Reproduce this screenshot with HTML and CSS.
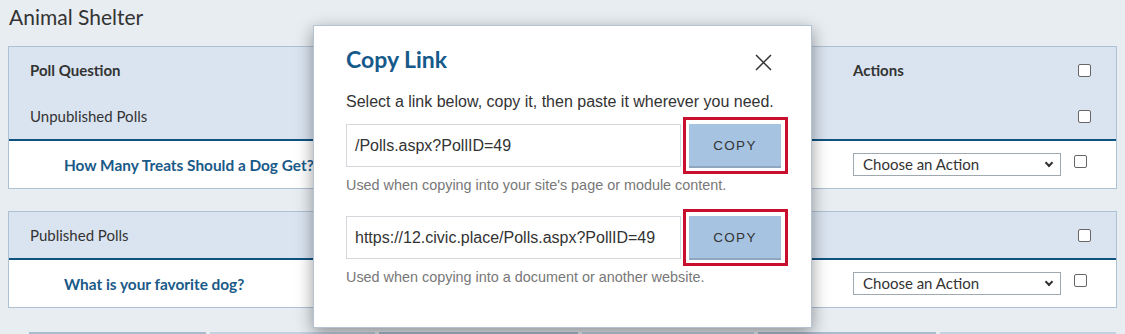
FILE: index.html
```html
<!DOCTYPE html>
<html lang="en">
<head>
    <meta charset="UTF-8">
    <title>Animal Shelter - Polls</title>
    <link rel="stylesheet" href="styles.css">
</head>
<body>
    <h1 class="page-title">Animal Shelter</h1>

    <div class="grid-table">
        <div class="row head">
            <div class="cell name strong">Poll Question</div>
            <div class="cell action strong">Actions</div>
            <div class="cell check"><span class="cb"></span></div>
        </div>
        <div class="row head group">
            <div class="cell name">Unpublished Polls</div>
            <div class="cell action"></div>
            <div class="cell check"><span class="cb"></span></div>
        </div>
        <div class="row item">
            <div class="cell name link">How Many Treats Should a Dog Get?</div>
            <div class="cell action">
                <div class="select">Choose an Action<span class="caret"></span></div>
            </div>
            <div class="cell check item-check"><span class="cb"></span></div>
        </div>
    </div>

    <div class="grid-table second">
        <div class="row head group">
            <div class="cell name">Published Polls</div>
            <div class="cell action"></div>
            <div class="cell check"><span class="cb"></span></div>
        </div>
        <div class="row item">
            <div class="cell name link">What is your favorite dog?</div>
            <div class="cell action">
                <div class="select">Choose an Action<span class="caret"></span></div>
            </div>
            <div class="cell check item-check"><span class="cb"></span></div>
        </div>
    </div>

    <div class="tabs">
        <span style="width: 177px"></span>
        <span class="light" style="width: 165px"></span>
        <span style="width: 199px"></span>
        <span class="light" style="width: 172px"></span>
        <span style="width: 178px"></span>
        <span class="light" style="width: 176px"></span>
    </div>

    <div class="modal">
        <div class="modal-head">
            <h2>Copy Link</h2>
            <svg class="close" width="17" height="17" viewBox="0 0 17 17">
                <path d="M1 1 L16 16 M16 1 L1 16" stroke="#333" stroke-width="1.5" fill="none"/>
            </svg>
        </div>
        <p class="intro">Select a link below, copy it, then paste it wherever you need.</p>

        <div class="link-row">
            <div class="field">/Polls.aspx?PollID=49</div>
            <div class="focus-ring"><button class="copy">COPY</button></div>
        </div>
        <p class="hint">Used when copying into your site's page or module content.</p>

        <div class="link-row">
            <div class="field">https://12.civic.place/Polls.aspx?PollID=49</div>
            <div class="focus-ring"><button class="copy">COPY</button></div>
        </div>
        <p class="hint">Used when copying into a document or another website.</p>
    </div>
</body>
</html>
```

FILE: styles.css
```css
body{
    margin: 0;
    padding: 0 8px;
    background-color: #e8edf2;
    font-family: Lato, "Open Sans", sans-serif;
    color: #333;
    height: 334px;
    overflow: hidden;
    position: relative;
}

.page-title{
    margin: 0;
    padding: 4px 1px 0;
    height: 46px;
    box-sizing: border-box;
    font-size: 21px;
    font-weight: 400;
    color: #333;
}

.grid-table{
    border: 1px solid #aec0d4;
    background-color: #fff;
    width: 1109px;
    box-sizing: border-box;
}

.grid-table.second{
    margin-top: 22px;
}

.row{
    display: grid;
    grid-template-columns: 1fr 208px 55px;
    align-items: center;
}

.row.head{
    background-color: #dae4f0;
    height: 46px;
}

.row.group{
    border-bottom: 2px solid #0f5380;
}

.row.item{
    height: 47px;
}

.cell{
    font-size: 15px;
}

.cell.name{
    padding-left: 21px;
}

.cell.link{
    padding-left: 55px;
    font-size: 15.4px;
    font-weight: 700;
    color: #1a5a88;
}

.strong{
    font-weight: 700;
    color: #333;
}

.cell.check{
    display: flex;
    padding-left: 17px;
}

.cb{
    display: block;
    width: 11px;
    height: 11px;
    border: 1px solid #666;
    border-radius: 2px;
    background: #fff;
}

.cell.item-check{
    padding-left: 13px;
    margin-top: -6px;
}

.select{
    width: 208px;
    height: 23px;
    box-sizing: border-box;
    border: 1px solid #a0a8b0;
    background: #fff;
    padding: 1px 9px;
    font-size: 15px;
    line-height: 19px;
    position: relative;
    color: #333;
}

.caret{
    position: absolute;
    right: 8px;
    top: 6px;
    width: 4px;
    height: 4px;
    border-right: 2px solid #333;
    border-bottom: 2px solid #333;
    transform: rotate(45deg);
}

.tabs{
    display: flex;
    gap: 4px;
    margin-top: 24px;
    padding-left: 21px;
}

.tabs span{
    height: 3px;
    background-color: #a9bbcf;
}

.tabs span.light{
    background-color: #c3d1e0;
}

.modal{
    position: absolute;
    left: 313px;
    top: 25px;
    width: 499px;
    height: 303px;
    box-sizing: border-box;
    background: #fff;
    border: 1px solid #b4c2d2;
    box-shadow: 0 5px 16px rgba(0, 0, 0, 0.4);
    padding: 0 24px 0 32px;
    font-family: "Liberation Sans", Arial, sans-serif;
}

.modal-head{
    display: flex;
    justify-content: space-between;
    align-items: center;
    height: 66px;
    box-sizing: border-box;
}

.modal-head h2{
    margin: 0;
    font-family: Lato, "Open Sans", sans-serif;
    font-size: 23px;
    font-weight: 700;
    color: #155a8a;
}

.close{
    margin-right: 15px;
    margin-top: 7px;
}

.intro{
    margin: 0;
    font-size: 16px;
    color: #333;
    line-height: 20px;
}

.link-row{
    display: flex;
    align-items: center;
    margin-top: 5px;
    gap: 2px;
}

.field{
    width: 335px;
    height: 43px;
    flex-shrink: 0;
    box-sizing: border-box;
    border: 1px solid #d4d8dc;
    padding: 0 8px;
    display: flex;
    align-items: center;
    font-size: 16px;
    color: #333;
}

.focus-ring{
    border: 3px solid #c8102e;
    padding: 4px 4px 3px 3px;
}

.copy{
    display: block;
    width: 92px;
    height: 44px;
    border: none;
    border-bottom: 2px solid #8fa6be;
    background-color: #a6c3e1;
    font-family: "Liberation Sans", Arial, sans-serif;
    font-size: 13.5px;
    letter-spacing: 1.3px;
    color: #333;
}

.hint{
    margin: 3px 0 0;
    font-size: 14.4px;
    color: #777;
}

.hint + .link-row{
    margin-top: 16px;
}
```
